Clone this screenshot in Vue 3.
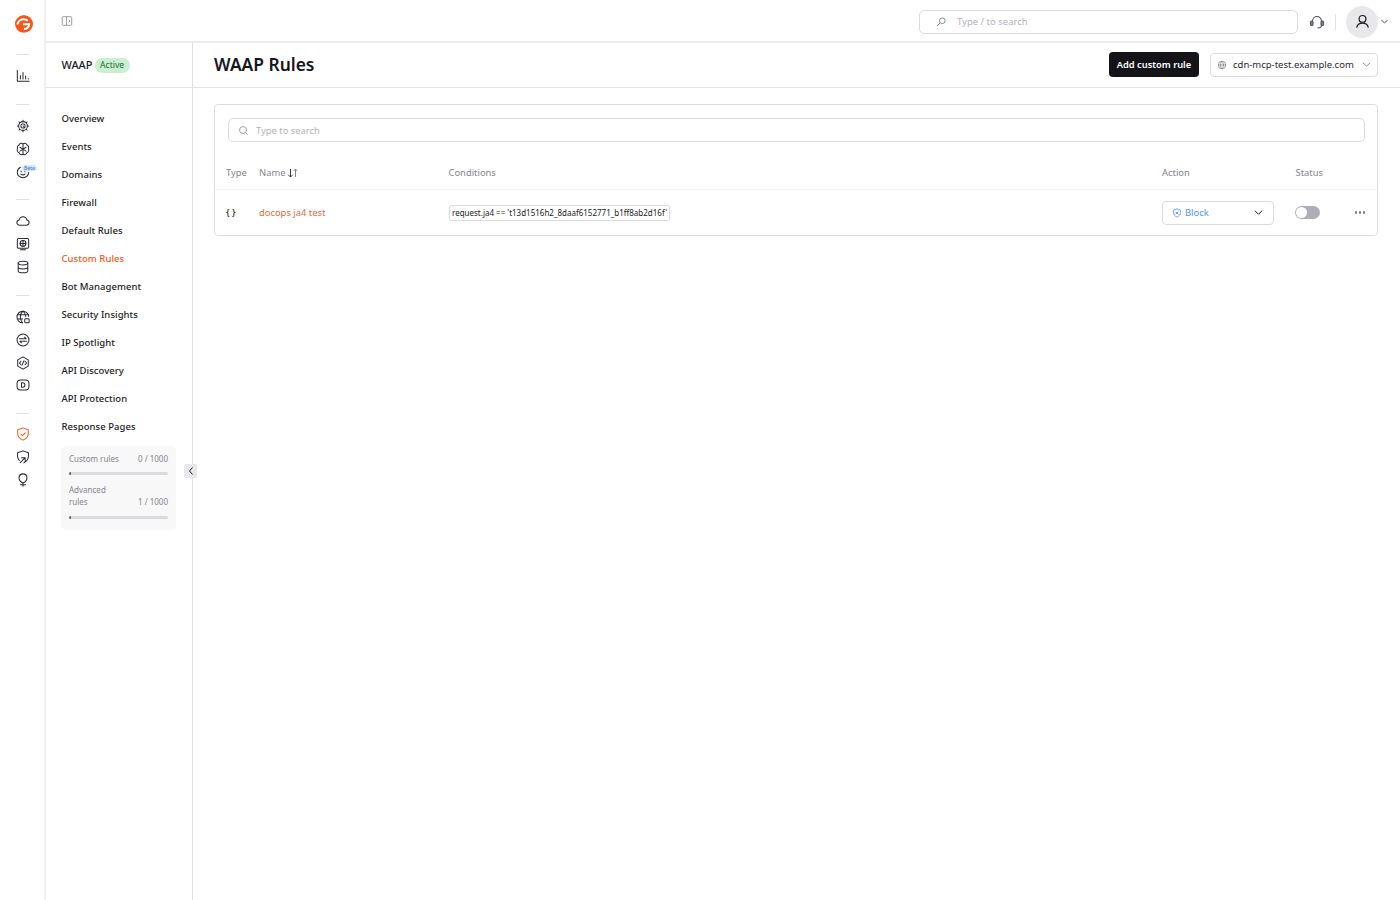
<script setup>
const navItems = ['Overview','Events','Domains','Firewall','Default Rules','Custom Rules','Bot Management','Security Insights','IP Spotlight','API Discovery','API Protection','Response Pages']
</script>

<template>
  <div class="app">
    <aside class="rail">
      <div class="logo">
        <svg width="20" height="20" viewBox="0 0 20 20">
          <circle cx="10" cy="10" r="9" fill="#f4581f"/>
          <path class="lw" d="M3.500 10.500C3.800 6.800 7.500 4.600 11 5.400c1 .2 2 .7 2.800 1.400"/>
          <path class="lw" d="M9 10.300h6.200c-.2 3-2.600 4.800-5.200 4.600"/>
          <path class="lt" d="M5 1.600C8 .1 12 .2 14.500 2"/>
          <path class="lt" d="M7 18.800c3 .8 6 .2 8.200-1.700"/>
        </svg>
      </div>
      <div class="sep first"></div>
      <div class="group">
        <div class="ico"><svg viewBox="0 0 16 16"><path d="M1.500 1.500v12.500h13.500M5 11.500V7.500M8 11.500V4M11 11.500V8M14 11.500v-.5"/></svg></div>
      </div>
      <div class="sep"></div>
      <div class="group">
        <div class="ico"><svg viewBox="0 0 16 16"><path d="M8 1.500v1.200M12.600 3.400l-.9.9M14.500 8h-1.200M12.600 12.600l-.9-.9M8 14.500v-1.200M3.400 12.600l.9-.9M1.500 8h1.200M3.400 3.400l.9.900"/><circle cx="8" cy="8" r="5"/><rect x="5.700" y="5.700" width="4.600" height="4.600" rx="1.500"/><path d="M8 8l2 2"/></svg></div>
        <div class="ico"><svg viewBox="0 0 16 16"><path d="M8 2.700v11M8 2.700C7 1 4.300 1.200 3.800 3.200 2 3.800 1 5.700 1.800 7.500.8 9.300 1.600 11.700 3.600 12.300c.5 2.200 3.400 2.800 4.400 1.400 1 1.400 3.900.8 4.400-1.400 2-.6 2.800-3 1.800-4.800.8-1.800-.2-3.700-2-4.300C11.700 1.200 9 1 8 2.700z"/><path d="M4.500 6L8 8.200 11.500 6M4.500 10.500L8 8.200l3.500 2.300"/></svg></div>
        <div class="ico beta-wrap">
          <svg viewBox="0 0 16 16"><path d="M5 2.500C2.800 3.700 1.500 5.700 1.500 8.200c0 3.500 2.900 6.300 6.500 6.300s6.500-2.800 6.500-6.300"/><path d="M5.700 10.400c1.400 1.100 3.200 1.100 4.600 0"/><path d="M5.800 7v.8M10.200 7v.8"/></svg>
          <span class="beta">Beta</span>
        </div>
      </div>
      <div class="sep third"></div>
      <div class="group">
        <div class="ico"><svg viewBox="0 0 16 16"><path d="M4.300 12.800C2.200 12.800 1 11.400 1 9.800c0-1.500 1.100-2.700 2.500-2.900C4.100 4.700 5.900 3.200 8 3.200c2.200 0 4 1.500 4.500 3.700 1.400.2 2.500 1.400 2.500 2.900 0 1.600-1.200 3-3.300 3z"/></svg></div>
        <div class="ico"><svg viewBox="0 0 16 16"><rect x="1.500" y="1.800" width="13" height="11" rx="1.500"/><circle cx="8" cy="7.300" r="3.300"/><path d="M8 4v6.600M4.700 7.300h6.600M5 14.700h6"/></svg></div>
        <div class="ico"><svg viewBox="0 0 16 16"><ellipse cx="8" cy="3.500" rx="5.500" ry="2.200"/><path d="M2.500 3.500v9c0 1.200 2.500 2.200 5.500 2.200s5.500-1 5.500-2.200v-9M2.500 8c0 1.200 2.500 2.200 5.500 2.200s5.500-1 5.500-2.200"/></svg></div>
      </div>
      <div class="sep"></div>
      <div class="group">
        <div class="ico"><svg viewBox="0 0 16 16"><path d="M14.500 7.500A6.700 6.700 0 1 0 7.500 14.700M1.500 5.500h13M1.500 10.200h6M8 1c-2 2-3 4.300-3 7s1 5 2.500 6.700M8 1c1.900 1.900 2.900 4 3 6.500"/><rect x="10" y="10" width="5" height="4.700" rx="1"/></svg></div>
        <div class="ico"><svg viewBox="0 0 16 16"><circle cx="8" cy="8" r="6.800"/><path d="M4 6.500h7.500L9.800 4.800M12 9.500H4.500l1.700 1.700"/></svg></div>
        <div class="ico"><svg viewBox="0 0 16 16"><path d="M8 1l6 3.500v7L8 15l-6-3.500v-7z"/><path d="M5.700 6L4 8l1.700 2M10.300 6L12 8l-1.700 2M9 5.500l-2 5"/></svg></div>
        <div class="ico short"><svg viewBox="0 0 16 16"><rect x="1.200" y="2.200" width="13.600" height="11.600" rx="4"/><path d="M6.300 5.500v5h1.500c1.400 0 2.400-1.100 2.400-2.500s-1-2.500-2.400-2.500z"/></svg></div>
      </div>
      <div class="sep last"></div>
      <div class="group">
        <div class="ico orange"><svg viewBox="0 0 16 16"><path d="M8 1l6 2.200v4.600c0 3.400-2.500 5.800-6 7.200-3.500-1.400-6-3.800-6-7.200V3.200z"/><path d="M5.500 8l1.900 1.800 3.200-3.200"/></svg></div>
        <div class="ico"><svg viewBox="0 0 16 16"><path d="M3.800 12C2.400 10.500 1.800 9 1.800 7.200V3.200L8 1l6.200 2.200v4c0 3.400-2.100 5.900-5.200 7.300"/><path d="M4.800 14.500L10 9.300M6.300 8.800h4.200V13"/></svg></div>
        <div class="ico"><svg viewBox="0 0 16 16"><path d="M3.500 5.700C3.500 3 5.500 1 8 1s4.500 2 4.500 4.700c0 2.300-1.400 4.300-4.500 5.800-3.100-1.500-4.500-3.500-4.500-5.800zM8 11.500V15M5 13.500h6"/></svg></div>
      </div>
    </aside>

    <div class="main">
      <header class="topbar">
        <span class="panel-toggle">
          <svg viewBox="0 0 14 14"><rect x="1.500" y="2" width="11" height="10" rx="1"/><path d="M6.500 2v10M9 5.500L10.500 7 9 8.500" /></svg>
        </span>
        <div class="top-right">
          <div class="global-search">
            <svg viewBox="0 0 14 14"><circle cx="8.500" cy="5.500" r="3.300"/><path d="M6 8l-3.500 3.500"/></svg>
            <span>Type / to search</span>
          </div>
          <svg class="headset" viewBox="0 0 16 16"><path d="M3.500 9V7a4.500 4.500 0 0 1 9 0v2"/><rect x="1.500" y="7" width="2.500" height="4.500" rx="1" class="solid"/><rect x="12" y="7" width="2.500" height="4.500" rx="1" class="solid"/><path d="M12.500 11.500c0 1.500-1.500 2.500-4 2.500"/></svg>
          <div class="vline"></div>
          <div class="avatar">
            <svg viewBox="0 0 16 16"><circle cx="8" cy="5.200" r="3.600"/><path d="M1.800 14.500c.6-3 3-4.700 6.200-4.700s5.600 1.700 6.200 4.700"/></svg>
          </div>
          <svg class="caret" viewBox="0 0 10 10"><path d="M1.500 3.500L5 6.500l3.500-3"/></svg>
        </div>
      </header>

      <div class="body">
        <nav class="side">
          <div class="side-head">
            <span class="waap">WAAP</span>
            <span class="active-pill">Active</span>
          </div>
          <ul class="nav-list">
            <li v-for="item in navItems" :key="item" :class="{ current: item === 'Custom Rules' }">{{ item }}</li>
          </ul>
          <div class="usage">
            <div class="usage-row"><span>Custom rules</span><span class="count">0 / 1000</span></div>
            <div class="track"><i></i></div>
            <div class="usage-row second"><span class="wrap">Advanced rules</span><span class="count">1 / 1000</span></div>
            <div class="track"><i></i></div>
          </div>
          <button class="collapse">
            <svg viewBox="0 0 8 10"><path d="M5.500 1.500L2.500 5l3 3.500"/></svg>
          </button>
        </nav>

        <section class="content">
          <div class="page-head">
            <h1>WAAP Rules</h1>
            <div class="head-actions">
              <button class="primary">Add custom rule</button>
              <div class="domain">
                <svg class="globe" viewBox="0 0 12 12"><circle cx="6" cy="6" r="4.500"/><path d="M1.500 6h9M6 1.500c-2.400 2.700-2.400 6.300 0 9M6 1.500c2.400 2.700 2.400 6.300 0 9"/></svg>
                <span>cdn-mcp-test.example.com</span>
                <svg class="chev" viewBox="0 0 10 10"><path d="M1 3.200L5 6.800l4-3.600"/></svg>
              </div>
            </div>
          </div>

          <div class="page-body">
            <div class="card">
              <div class="search">
                <svg viewBox="0 0 12 12"><circle cx="5.500" cy="5.500" r="3.800"/><path d="M8.400 8.400L10.500 10.500"/></svg>
                <span>Type to search</span>
              </div>
              <div class="row header">
                <div class="c-type">Type</div>
                <div class="c-name">Name <svg class="sort" viewBox="0 0 12 10"><path d="M3.500 1v8M1.200 6.700L3.500 9l2.300-2.300" class="dark"/><path d="M8.500 9V1M6.500 3L8.500 1l2 2"/></svg></div>
                <div class="c-cond">Conditions</div>
                <div class="c-action">Action</div>
                <div class="c-status">Status</div>
              </div>
              <div class="row data">
                <div class="c-type braces">{ }</div>
                <div class="c-name rule-name">docops ja4 test</div>
                <div class="c-cond"><span class="cond-tag">request.ja4 == 't13d1516h2_8daaf6152771_b1ff8ab2d16f'</span></div>
                <div class="c-action">
                  <div class="action-select">
                    <svg class="block-ico" viewBox="0 0 12 12"><path d="M6 1l4 1.500v3.300c0 2.400-1.700 4-4 5.200-2.300-1.200-4-2.800-4-5.200V2.500z"/><path d="M4.500 4.500l3 3M7.500 4.500l-3 3"/></svg>
                    <span>Block</span>
                    <svg class="chev-dark" viewBox="0 0 10 10"><path d="M1 3L5 7l4-4"/></svg>
                  </div>
                </div>
                <div class="c-status"><span class="toggle"><i></i></span></div>
                <div class="c-more"><i></i><i></i><i></i></div>
              </div>
            </div>
          </div>
        </section>
      </div>
    </div>
  </div>
</template>

<style>
html, body { margin: 0; background: #fff; }
</style>

<style scoped>
.app { display: flex; height: 900px; width: 1400px; overflow: hidden; font-family: "Noto Sans", "Open Sans", sans-serif; color: #1c1a22; background: #fff; }

.rail { width: 43px; padding-left: 1px; flex: none; border-right: 2px solid #f0eff2; display: flex; flex-direction: column; align-items: center; }
.logo { height: 20px; margin-top: 14px; }
.logo svg { display: block; margin-left: 2px; }
.lw { fill: none; stroke: #fff; stroke-width: 2; }
.lt { fill: none; stroke: #fff; stroke-width: .8; }
.sep { width: 13px; height: 1px; background: #e2e0e5; margin: 17px 0 9px; flex: none; }
.sep.first { margin: 20px 0 9px; }
.sep.third { margin-top: 16px; }
.sep.last { margin-bottom: 8px; }
.group { display: flex; flex-direction: column; align-items: center; }
.ico { width: 23px; height: 23px; display: flex; align-items: center; justify-content: center; position: relative; }
.ico.short { height: 22px; }
.ico svg { width: 14px; height: 14px; fill: none; stroke: #2a2830; stroke-width: 1.150; stroke-linecap: round; stroke-linejoin: round; }
.ico.orange svg { stroke: #f4581f; }
.beta { position: absolute; top: 5px; left: 11px; font-size: 5px; line-height: 6px; padding: 0 2px; background: #d6e6fb; color: #2f74d0; border-radius: 3px; }

.main { flex: 1; min-width: 0; display: flex; flex-direction: column; }
.topbar { height: 39px; flex: none; border-bottom: 2px solid #ececef; display: flex; align-items: center; justify-content: space-between; padding: 2px 11px 0 15px; }
.panel-toggle svg { display: block; width: 12px; height: 12px; margin-top: -1px; fill: none; stroke: #8d8a94; stroke-width: 1; }
.top-right { display: flex; align-items: center; }
.global-search { width: 377px; height: 22px; border: 1px solid #dddbe0; border-radius: 5px; display: flex; align-items: center; font-size: 9.500px; color: #b5b2bc; }
.global-search svg { width: 12px; height: 12px; margin-left: 15px; margin-right: 10px; fill: none; stroke: #77747e; stroke-width: 1; }
.headset { width: 16px; height: 16px; margin-left: 11px; fill: none; stroke: #55525c; stroke-width: 1.100; }
.headset .solid { fill: #8a8790; stroke: #55525c; }
.vline { width: 1px; height: 16px; background: #e4e2e7; margin: 0 10px 0 10px; }
.avatar { width: 32px; height: 32px; border-radius: 50%; background: #e8e7ea; display: flex; align-items: center; justify-content: center; }
.avatar svg { width: 15px; height: 15px; fill: none; stroke: #1c1a22; stroke-width: 1.300; }
.caret { width: 9px; height: 9px; margin-left: 2px; fill: none; stroke: #3a3840; stroke-width: 1; }

.body { flex: 1; display: flex; min-height: 0; }
.side { width: 147px; box-sizing: border-box; flex: none; border-right: 1px solid #dfdee3; position: relative; }
.side-head { height: 45px; box-sizing: border-box; border-bottom: 1px solid #e4e3e7; display: flex; align-items: center; padding: 0 0 1px 15.500px; }
.waap { font-size: 11px; font-weight: 500; }
.active-pill { margin: 1px 0 0 2px; height: 15px; line-height: 15px; padding: 0 5.500px; font-size: 8.600px; border-radius: 8px; background: #c9efcf; color: #1a6b3a; }
.nav-list { list-style: none; margin: 17px 0 0; padding: 0 0 0 15.500px; }
.nav-list li { height: 28px; line-height: 28px; font-size: 9.500px; font-weight: 500; letter-spacing: .05px; white-space: nowrap; color: #1c1a22; }
.nav-list li.current { color: #f4581f; }
.usage { margin: 5px 0 0 15px; width: 115px; height: 84px; box-sizing: border-box; background: #f8f8f9; border-radius: 5px; padding: 7px 8px 0 8px; font-size: 8px; color: #86838e; }
.usage-row { display: flex; justify-content: space-between; align-items: flex-end; line-height: 11px; }
.usage-row .wrap { width: 48px; }
.count { color: #86838e; }
.usage-row.second { margin-top: 9px; line-height: 12px; }
.track { height: 3px; background: #dcdae0; border-radius: 2px; margin-top: 8px; overflow: hidden; }
.track i { display: block; width: 2px; height: 3px; background: #6b6874; }
.collapse { position: absolute; right: -5px; top: 421px; width: 13px; height: 14px; padding: 0; border: 0; border-radius: 2px; background: #e8e7ea; display: flex; align-items: center; justify-content: center; }
.collapse svg { width: 8px; height: 10px; fill: none; stroke: #1c1a22; stroke-width: 1; }

.content { flex: 1; min-width: 0; display: flex; flex-direction: column; }
.page-head { height: 45px; box-sizing: border-box; border-bottom: 1px solid #e4e3e7; display: flex; align-items: center; justify-content: space-between; padding: 0 22px 1px 21px; }
h1 { margin: -1px 0 0; font-size: 17.400px; font-weight: 600; color: #17151c; }
.head-actions { display: flex; align-items: center; gap: 11px; }
.primary { height: 25px; width: 90px; padding: 0; border: 0; border-radius: 4px; background: #141318; color: #fff; font: 600 9.300px "Noto Sans", sans-serif; }
.domain { width: 168px; height: 24px; box-sizing: border-box; border: 1px solid #dddbe0; border-radius: 4px; display: flex; align-items: center; font-size: 9.500px; color: #2b2932; }
.globe { width: 10px; height: 10px; margin: 0 6px 0 6px; fill: none; stroke: #5f5c66; stroke-width: .7; }
.chev { width: 9px; height: 9px; margin-left: auto; margin-right: 6px; fill: none; stroke: #77747e; stroke-width: .9; }

.page-body { padding: 16px 22px 0 21px; }
.card { height: 132px; box-sizing: border-box; border: 1px solid #dddbe0; border-radius: 4px; }
.search { margin: 13px 12px 0 13px; height: 24px; box-sizing: border-box; border: 1px solid #dddbe0; border-radius: 5px; display: flex; align-items: center; font-size: 9.400px; color: #b5b2bc; }
.search svg { width: 11px; height: 11px; margin: 0 7px 0 9px; fill: none; stroke: #8d8a94; stroke-width: .9; }
.row { display: flex; align-items: center; font-size: 9.400px; position: relative; }
.row.header { height: 48px; padding-top: 14px; box-sizing: border-box; color: #86838e; border-bottom: 1px solid #f3f2f5; }
.row.data { height: 45px; }
.c-type { width: 44px; padding-left: 11px; box-sizing: border-box; flex: none; }
.c-name { width: 189.500px; flex: none; display: flex; align-items: center; gap: 2px; }
.c-cond { width: 713.500px; flex: none; }
.c-action { width: 133.500px; flex: none; }
.c-status { flex: none; }
.sort { width: 12px; height: 10px; fill: none; stroke: #77747e; stroke-width: .9; }
.sort .dark { stroke: #26242c; }
.braces { font-size: 9.400px; font-weight: 500; color: #2b2932; margin-top: -1px; }
.rule-name { color: #e06a3c; }
.cond-tag { display: inline-block; height: 16px; line-height: 14px; box-sizing: border-box; padding: 0 2.500px; border: 1px solid #dddbe0; border-radius: 2px; font-size: 8px; white-space: nowrap; color: #1c1a22; }
.action-select { width: 112px; height: 24px; box-sizing: border-box; border: 1px solid #dddbe0; border-radius: 4px; display: flex; align-items: center; padding: 0 10px 0 9px; color: #4f94f0; font-size: 9.400px; }
.block-ico { width: 10px; height: 10px; margin-right: 3px; fill: none; stroke: #4f94f0; stroke-width: 1; }
.chev-dark { width: 9px; height: 9px; margin-left: auto; fill: none; stroke: #1c1a22; stroke-width: 1.100; }
.row.data .c-status { margin-left: -1px; }
.toggle { display: block; width: 25px; height: 13px; border-radius: 7px; background: #b0adb6; position: relative; }
.toggle i { position: absolute; left: 1px; top: 1px; width: 11px; height: 11px; border-radius: 50%; background: #fff; }
.c-more { position: absolute; right: 12px; top: 21px; display: flex; gap: 1.500px; }
.c-more i { width: 2.500px; height: 2.500px; border-radius: 50%; background: #7c7983; }
</style>
